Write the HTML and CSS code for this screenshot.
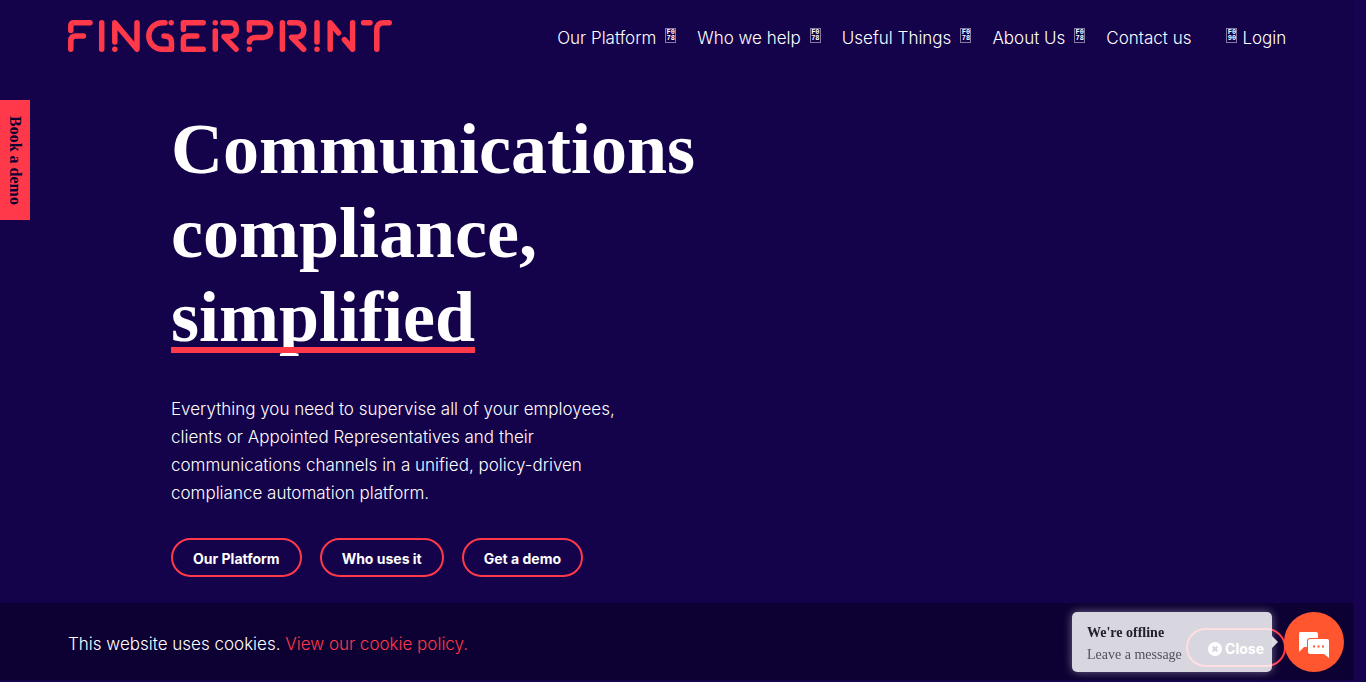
FILE: index.html
```html
<!DOCTYPE html>
<html lang="en">
<head>
  <meta charset="UTF-8">
  <meta name="viewport" content="width=device-width, initial-scale=1">
  <title>Fingerprint</title>
  <link rel="stylesheet" href="styles.css">
</head>
<body>

  <!-- Header -->
  <header class="site-header">
    <a href="#" class="logo" aria-label="Fingerprint">
      <svg viewBox="68 20 324 32" width="324" height="32">
        <path d="M70.8 30.5V26Q70.8 22.8 74 22.8H90M70.8 49.2V41Q70.8 36 76 36H83.4"/>
        <path d="M101.7 22.8V49.2"/>
        <path d="M114.8 42V22.8L137 49.2V22.8M114.8 49.2V49.21"/>
        <path d="M165 22.8H162A13.2 13.2 0 0 0 162 49.2H171.5V42Q171.5 36 164 36M171.2 22.8V22.81"/>
        <path d="M183.4 29.5V22.8H203.2M196.8 36H188Q183.4 36 183.4 40V49.2H203.2"/>
        <path d="M215.3 22.8V22.81M215.3 31V49.2M223 22.8H230Q236.4 22.8 236.4 29.5T229 36.6H224L236 49.2"/>
        <path d="M249.4 30V22.8H263Q270.6 22.8 270.6 30T263 37.6H256Q250 37.6 249.4 42M249.4 49.2V49.21"/>
        <path d="M282.4 22.8V49.2M289.6 22.8H296Q303.8 22.8 303.8 30T296 37.2H291.5L303.6 49.2"/>
        <path d="M317 22.8V42M317 49.2V49.21"/>
        <path d="M330.2 49.2V22.8L338.6 33M344.4 39.6L352.6 49.2V22.8"/>
        <path d="M363.6 22.8H370M376.8 49.2V30Q376.8 22.8 384 22.8H389.2"/>
      </svg>
    </a>
    <nav class="main-nav">
      <a href="#">Our Platform <span class="icon">F0<br>78</span></a>
      <a href="#">Who we help <span class="icon">F0<br>78</span></a>
      <a href="#">Useful Things <span class="icon">F0<br>78</span></a>
      <a href="#">About Us <span class="icon">F0<br>78</span></a>
      <a href="#">Contact us</a>
      <a href="#" class="login"><span class="icon">F0<br>90</span> Login</a>
    </nav>
  </header>

  <a href="#" class="side-tab">Book a demo</a>

  <!-- Hero -->
  <main class="hero">
    <h1>Communications<br>compliance,<br><span class="underlined">simplified</span></h1>
    <p>Everything you need to supervise all of your employees, clients or Appointed Representatives and their communications channels in a unified, policy-driven compliance automation platform.</p>
    <div class="hero-buttons">
      <a href="#" class="btn">Our Platform</a>
      <a href="#" class="btn">Who uses it</a>
      <a href="#" class="btn">Get a demo</a>
    </div>
  </main>

  <!-- Cookie bar -->
  <div class="cookie-bar">
    <p>This website uses cookies. <a href="#">View our cookie policy.</a></p>
    <button type="button" class="btn btn-close">
      <svg viewBox="0 0 14 14" width="14" height="14">
        <circle cx="7" cy="7" r="7" fill="#fff"/>
        <path d="M4.6 4.6L9.4 9.4M9.4 4.6L4.6 9.4" stroke="#14024b" stroke-width="2.2"/>
      </svg>
      Close
    </button>
  </div>

  <!-- Chat widget -->
  <div class="chat">
    <div class="chat-message">
      <strong>We're offline</strong>
      <span>Leave a message</span>
    </div>
    <button type="button" class="chat-button" aria-label="Open chat">
      <svg viewBox="0 0 32 28" width="32" height="28">
        <path d="M2 1H18Q20 1 20 3V7H12Q9 7 9 10V16H6L1 21V3Q1 1 2 1Z" fill="#fff"/>
        <path d="M12 8H29Q31 8 31 10V27L26 23H12Q10 23 10 21V10Q10 8 12 8Z" fill="#fff"/>
        <path d="M15 14.500h2v2h-2zM19.500 14.500h2v2h-2zM24 14.500h2v2h-2z" fill="#ff5630"/>
      </svg>
    </button>
  </div>

</body>
</html>
```
FILE: styles.css
```css
* {
  box-sizing: border-box;
}

html {
  background: #180350;
}

body {
  margin: 0 12px 0 0;
  min-height: 100vh;
  background: #14024b;
  color: #fff;
  font-family: Inter, "Liberation Sans", sans-serif;
  font-size: 17px;
  font-weight: 300;
  line-height: 28px;
}

a {
  color: inherit;
  text-decoration: none;
}

/* Header */
.site-header {
  display: flex;
  justify-content: space-between;
  padding: 20px 5% 0;
}

.logo svg {
  display: block;
  fill: none;
  stroke: #ff394a;
  stroke-width: 5.5;
  stroke-linecap: round;
  stroke-linejoin: round;
}

.main-nav {
  display: flex;
  gap: 21px;
  padding-top: 4px;
  white-space: nowrap;
}

.main-nav a {
  display: flex;
  gap: 9px;
}

.icon {
  width: 11px;
  height: 15px;
  margin-top: 4px;
  border: 1px solid #85799f;
  font-family: "Liberation Mono", monospace;
  font-size: 7px;
  font-weight: bold;
  line-height: 6px;
  text-align: center;
}

.main-nav .login {
  gap: 5px;
  margin-left: 14px;
}

/* Side tab */
.side-tab {
  position: fixed;
  top: 100px;
  left: 0;
  width: 30px;
  height: 120px;
  background: #ff394a;
  color: #0d0033;
  font-family: "Liberation Serif", serif;
  font-size: 16px;
  font-weight: bold;
  line-height: 30px;
  text-align: center;
  writing-mode: vertical-rl;
}

/* Hero */
.hero {
  padding: 55px 0 0 171px;
}

.hero h1 {
  margin: 0 0 36px;
  font-family: "Liberation Serif", serif;
  font-size: 72px;
  font-weight: bold;
  line-height: 84px;
}

.underlined {
  position: relative;
}

.underlined::after {
  content: "";
  position: absolute;
  left: 0;
  right: 0;
  bottom: 4px;
  height: 6px;
  background: #ff394a;
}

.hero p {
  max-width: 460px;
  margin: 0 0 31px;
}

.hero-buttons {
  display: flex;
  gap: 18px;
}

.btn {
  padding: 7px 20px 4px;
  border: 2px solid #ff394a;
  border-radius: 20px;
  background: none;
  color: #fff;
  font-family: inherit;
  font-size: 14px;
  font-weight: bold;
  line-height: 24px;
}

/* Cookie bar */
.cookie-bar {
  position: fixed;
  left: 0;
  right: 12px;
  bottom: 2px;
  display: flex;
  justify-content: space-between;
  align-items: center;
  height: 77px;
  padding: 4px 68px 0;
  background: #0d0033;
}

.cookie-bar p {
  margin: 0;
}

.cookie-bar p a {
  color: #ff394a;
}

.btn-close {
  display: flex;
  align-items: center;
  gap: 3px;
  margin-top: 8px;
}

/* Chat widget */
.chat {
  position: fixed;
  right: 22px;
  bottom: 10px;
  display: flex;
  gap: 12px;
}

.chat-message {
  position: relative;
  display: flex;
  flex-direction: column;
  justify-content: center;
  width: 200px;
  height: 60px;
  padding: 4px 15px 0;
  border-radius: 5px;
  background: rgba(255, 255, 255, 0.84);
  box-shadow: 0 0 10px rgba(255, 255, 255, 0.4);
  color: #55505f;
  font-family: "Liberation Serif", serif;
  font-size: 14px;
  font-weight: normal;
  line-height: 22px;
}

.chat-message strong {
  color: #22202c;
}

.chat-message::after {
  content: "";
  position: absolute;
  top: 24px;
  left: 100%;
  border: 6px solid transparent;
  border-left-color: rgba(255, 255, 255, 0.84);
  border-right: 0;
}

.chat-button {
  display: flex;
  align-items: center;
  justify-content: center;
  width: 60px;
  height: 60px;
  padding: 6px 0 0;
  border: 0;
  border-radius: 50%;
  background: #ff5630;
}
```
